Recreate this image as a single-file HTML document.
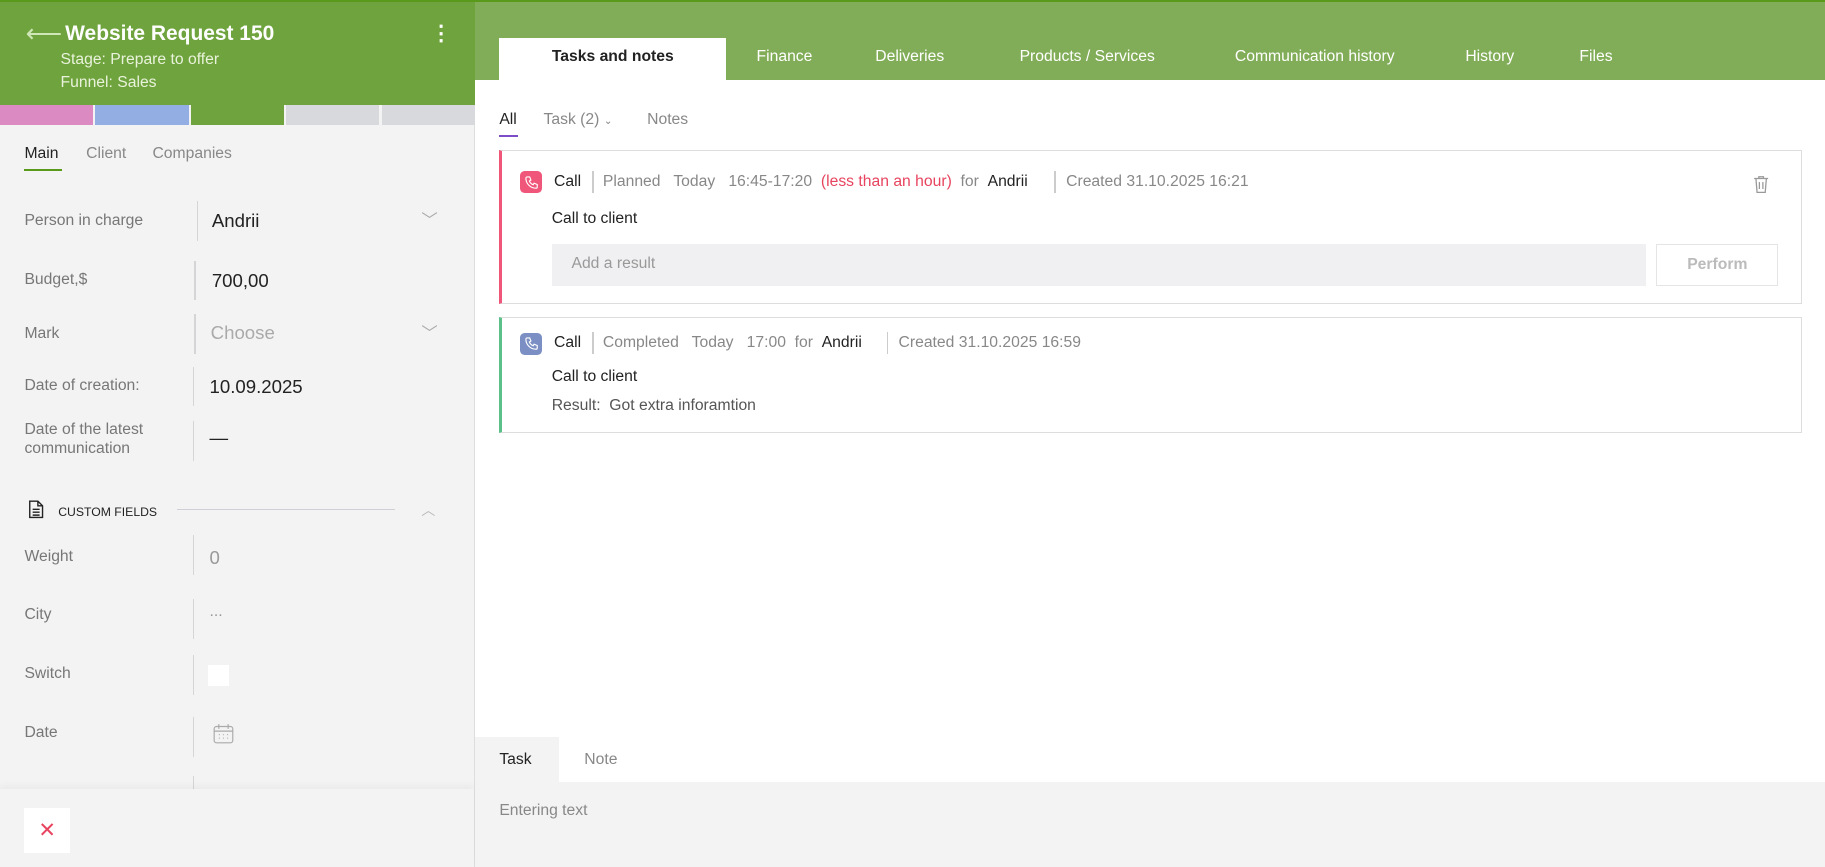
<!DOCTYPE html>
<html><head><meta charset="utf-8"><style>
*{box-sizing:border-box;margin:0;padding:0}
html,body{width:1825px;height:867px;overflow:hidden;background:#fff}
#w{zoom:1.16390;width:1568px;height:745px;position:relative;font-family:"Liberation Sans",sans-serif;font-size:13.5px;color:#222}
.a{position:absolute;white-space:nowrap}
.g{color:#888}
.lab{color:#777;font-size:13.5px}
.vl{position:absolute;left:167px;width:1px;background:#d5d5d8;height:34px}
</style></head><body><div id="w">
<!-- left panel -->
<div class="a" style="left:0;top:0;width:408px;height:745px;background:#f3f3f3;border-right:1px solid #ddd"></div>
<div class="a" style="left:0;top:0;width:408px;height:90px;background:#6fa33d;border-top:2px solid #5a9a1a"></div>
<div class="a" style="left:22px;top:16px;color:#cfe6b6;font-size:22px">⟵</div>
<div class="a" style="left:56px;top:19px;color:#fff;font-size:18px;font-weight:bold">Website Request 150</div>
<div class="a" style="left:370px;top:18px;color:#fff;font-size:18px;font-weight:bold">⋮</div>
<div class="a" style="left:52px;top:44px;color:#e9f3dc;font-size:13.5px">Stage: Prepare to offer</div>
<div class="a" style="left:52px;top:64px;color:#e9f3dc;font-size:13.5px">Funnel: Sales</div>
<div class="a" style="left:0;top:90px;width:80px;height:17px;background:#dc8bc2"></div>
<div class="a" style="left:82px;top:90px;width:80px;height:17px;background:#93aee2"></div>
<div class="a" style="left:164px;top:90px;width:80px;height:17px;background:#6fa33d"></div>
<div class="a" style="left:246px;top:90px;width:80px;height:17px;background:#d8d9dd"></div>
<div class="a" style="left:328px;top:90px;width:80px;height:17px;background:#d8d9dd"></div>
<div class="a" style="left:21px;top:125px;color:#222">Main</div>
<div class="a" style="left:21px;top:145px;width:32px;height:2px;background:#5a9a1a"></div>
<div class="a g" style="left:74px;top:125px">Client</div>
<div class="a g" style="left:131px;top:125px">Companies</div>
<div class="a lab" style="left:21px;top:182px">Person in charge</div><div class="vl" style="left:169px;top:173px"></div>
<div class="a" style="left:182px;top:180px;font-size:16px">Andrii</div>
<div class="a" style="left:362px;top:178px;color:#aaa;font-size:14px">﹀</div>
<div class="a lab" style="left:21px;top:233px">Budget,$</div><div class="vl" style="top:224px"></div>
<div class="a" style="left:182px;top:232px;font-size:16px">700,00</div>
<div class="a lab" style="left:21px;top:279px">Mark</div><div class="vl" style="top:270px"></div>
<div class="a" style="left:181px;top:277px;font-size:16px;color:#aaa">Choose</div>
<div class="a" style="left:362px;top:275px;color:#aaa;font-size:14px">﹀</div>
<div class="a lab" style="left:21px;top:324px">Date of creation:</div><div class="vl" style="left:166px;top:315px"></div>
<div class="a" style="left:180px;top:323px;font-size:16px">10.09.2025</div>
<div class="a lab" style="left:21px;top:362px;line-height:16px">Date of the latest<br>communication</div><div class="vl" style="left:166px;top:362px"></div>
<div class="a" style="left:180px;top:367px;font-size:16px">—</div>
<svg class="a" style="left:24px;top:430px" width="14" height="16" viewBox="0 0 14 16"><path d="M1.5 1h7l4 4v10h-11z M8.5 1v4h4 M4 8h6M4 10.5h6M4 13h6" fill="none" stroke="#222" stroke-width="1.2"/></svg>
<div class="a" style="left:50px;top:434px;font-size:10.5px">CUSTOM FIELDS</div>
<div class="a" style="left:152px;top:437px;width:187px;height:1px;background:#cfcfd6"></div>
<div class="a" style="left:362px;top:430px;color:#bbb;font-size:12px">︿</div>
<div class="a lab" style="left:21px;top:471px">Weight</div><div class="vl" style="left:166px;top:460px"></div>
<div class="a" style="left:180px;top:470px;font-size:16px;color:#999">0</div>
<div class="a lab" style="left:21px;top:521px">City</div><div class="vl" style="left:166px;top:515px"></div>
<div class="a" style="left:180px;top:518px;color:#999">...</div>
<div class="a lab" style="left:21px;top:571px">Switch</div><div class="vl" style="left:166px;top:563px"></div>
<div class="a" style="left:179px;top:571px;width:18px;height:18px;background:#fff"></div>
<div class="a lab" style="left:21px;top:622px">Date</div><div class="vl" style="left:166px;top:616px"></div>
<svg class="a" style="left:183px;top:621px" width="18" height="18" viewBox="0 0 18 18"><rect x="1" y="3" width="16" height="14" rx="2" fill="none" stroke="#aaa"/><path d="M1 7h16M5 1v4M13 1v4" stroke="#aaa"/><path d="M5 10h1M8.5 10h1M12 10h1M5 13h1M8.5 13h1M12 13h1" stroke="#bbb"/></svg>
<div class="vl" style="left:166px;top:667px;height:12px"></div>
<div class="a" style="left:0;top:678px;width:407px;height:67px;background:#f3f3f3;box-shadow:0 -3px 6px rgba(0,0,0,0.04)"></div>
<div class="a" style="left:21px;top:694px;width:39px;height:39px;background:#fff;color:#e8445f;font-size:18px;text-align:center;line-height:39px">✕</div>
<!-- right header -->
<div class="a" style="left:408px;top:0;width:1160px;height:69px;background:#82ad58;border-top:2px solid #5a9a1a"></div>
<div class="a" style="left:429px;top:33px;width:195px;height:36px;background:#fff;text-align:center;line-height:33px;font-weight:bold;font-size:13.5px">Tasks and notes</div>
<div class="a" style="left:650px;top:41px;color:#fff">Finance</div>
<div class="a" style="left:752px;top:41px;color:#fff">Deliveries</div>
<div class="a" style="left:876px;top:41px;color:#fff">Products / Services</div>
<div class="a" style="left:1061px;top:41px;color:#fff">Communication history</div>
<div class="a" style="left:1259px;top:41px;color:#fff">History</div>
<div class="a" style="left:1357px;top:41px;color:#fff">Files</div>
<div class="a" style="left:429px;top:95px">All</div>
<div class="a" style="left:429px;top:116px;width:16px;height:2px;background:#7b4ec8"></div>
<div class="a g" style="left:467px;top:95px">Task (2) <span style="font-size:9px">⌄</span></div>
<div class="a g" style="left:556px;top:95px">Notes</div>
<!-- card 1 -->
<div class="a" style="left:429px;top:129px;width:1119px;height:132px;border:1px solid #ddd;border-left:3px solid #f0557a"></div>
<div class="a" style="left:447px;top:147px;width:19px;height:19px;border-radius:4px;background:#f0557a"></div>
<svg class="a" style="left:450px;top:150px" width="13" height="13" viewBox="0 0 24 24"><path d="M5 3h4l2 5-2.5 1.5a11 11 0 0 0 6 6L16 13l5 2v4a2 2 0 0 1-2 2A16 16 0 0 1 3 5a2 2 0 0 1 2-2z" fill="none" stroke="#fff" stroke-width="1.8"/></svg>
<div class="a" style="left:476px;top:149px">Call</div>
<div class="a" style="left:509px;top:147px;width:1px;height:19px;background:#ccc"></div>
<div class="a g" style="left:518px;top:149px">Planned &nbsp; Today &nbsp; 16:45-17:20 &nbsp;<span style="color:#e8445f">(less than an hour)</span>&nbsp; for &nbsp;<span style="color:#222">Andrii</span></div>
<div class="a" style="left:906px;top:147px;width:1px;height:19px;background:#ccc"></div>
<div class="a g" style="left:916px;top:149px">Created 31.10.2025 16:21</div>
<svg class="a" style="left:1506px;top:150px" width="14" height="16" viewBox="0 0 14 16"><path d="M1 3h12M5 3V1.5h4V3M2.5 3l1 12h7l1-12M5.5 6v6M8.5 6v6" fill="none" stroke="#999" stroke-width="1.1"/></svg>
<div class="a" style="left:474px;top:180px">Call to client</div>
<div class="a" style="left:474px;top:210px;width:940px;height:36px;background:#f0f0f2;color:#999;padding:9px 17px">Add a result</div>
<div class="a" style="left:1423px;top:210px;width:105px;height:36px;border:1px solid #e5e5e5;color:#bbb;text-align:center;line-height:34px;font-weight:bold">Perform</div>
<!-- card 2 -->
<div class="a" style="left:429px;top:272px;width:1119px;height:100px;border:1px solid #ddd;border-left:3px solid #5cc08a"></div>
<div class="a" style="left:447px;top:286px;width:19px;height:19px;border-radius:4px;background:#7b8fc4"></div>
<svg class="a" style="left:450px;top:289px" width="13" height="13" viewBox="0 0 24 24"><path d="M5 3h4l2 5-2.5 1.5a11 11 0 0 0 6 6L16 13l5 2v4a2 2 0 0 1-2 2A16 16 0 0 1 3 5a2 2 0 0 1 2-2z" fill="none" stroke="#fff" stroke-width="1.8"/></svg>
<div class="a" style="left:476px;top:287px">Call</div>
<div class="a" style="left:509px;top:285px;width:1px;height:19px;background:#ccc"></div>
<div class="a g" style="left:518px;top:287px">Completed &nbsp; Today &nbsp; 17:00 &nbsp;for &nbsp;<span style="color:#222">Andrii</span></div>
<div class="a" style="left:762px;top:285px;width:1px;height:19px;background:#ccc"></div>
<div class="a g" style="left:772px;top:287px">Created 31.10.2025 16:59</div>
<div class="a" style="left:474px;top:316px">Call to client</div>
<div class="a" style="left:474px;top:341px;color:#555">Result: &nbsp;Got extra inforamtion</div>
<!-- bottom -->
<div class="a" style="left:408px;top:633px;width:1160px;height:112px;background:#f3f3f3"></div>
<div class="a" style="left:480px;top:633px;width:1088px;height:39px;background:#fff"></div>
<div class="a" style="left:429px;top:645px">Task</div>
<div class="a g" style="left:502px;top:645px">Note</div>
<div class="a g" style="left:429px;top:689px">Entering text</div>
</div></body></html>
